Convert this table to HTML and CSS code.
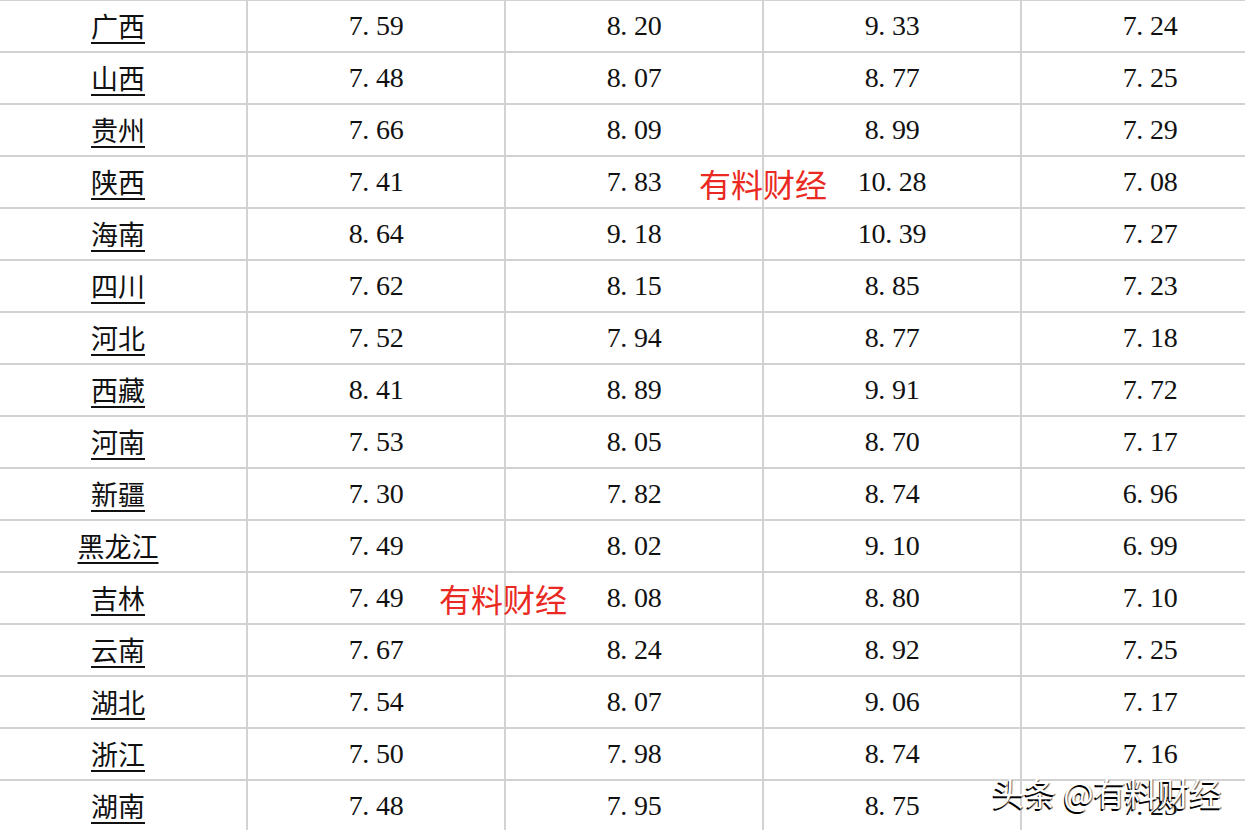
FILE: index.html
```html
<!DOCTYPE html>
<html lang="zh-CN">
<head>
<meta charset="utf-8">
<title>各地数据</title>
<link rel="stylesheet" href="styles.css">
</head>
<body>
<div class="sheet">
<table class="grid">
<tbody>
<tr><td class="name"><u>广西</u></td><td>7<span class="d">.</span>59</td><td>8<span class="d">.</span>20</td><td>9<span class="d">.</span>33</td><td>7<span class="d">.</span>24</td></tr>
<tr><td class="name"><u>山西</u></td><td>7<span class="d">.</span>48</td><td>8<span class="d">.</span>07</td><td>8<span class="d">.</span>77</td><td>7<span class="d">.</span>25</td></tr>
<tr><td class="name"><u>贵州</u></td><td>7<span class="d">.</span>66</td><td>8<span class="d">.</span>09</td><td>8<span class="d">.</span>99</td><td>7<span class="d">.</span>29</td></tr>
<tr><td class="name"><u>陕西</u></td><td>7<span class="d">.</span>41</td><td>7<span class="d">.</span>83</td><td>10<span class="d">.</span>28</td><td>7<span class="d">.</span>08</td></tr>
<tr><td class="name"><u>海南</u></td><td>8<span class="d">.</span>64</td><td>9<span class="d">.</span>18</td><td>10<span class="d">.</span>39</td><td>7<span class="d">.</span>27</td></tr>
<tr><td class="name"><u>四川</u></td><td>7<span class="d">.</span>62</td><td>8<span class="d">.</span>15</td><td>8<span class="d">.</span>85</td><td>7<span class="d">.</span>23</td></tr>
<tr><td class="name"><u>河北</u></td><td>7<span class="d">.</span>52</td><td>7<span class="d">.</span>94</td><td>8<span class="d">.</span>77</td><td>7<span class="d">.</span>18</td></tr>
<tr><td class="name"><u>西藏</u></td><td>8<span class="d">.</span>41</td><td>8<span class="d">.</span>89</td><td>9<span class="d">.</span>91</td><td>7<span class="d">.</span>72</td></tr>
<tr><td class="name"><u>河南</u></td><td>7<span class="d">.</span>53</td><td>8<span class="d">.</span>05</td><td>8<span class="d">.</span>70</td><td>7<span class="d">.</span>17</td></tr>
<tr><td class="name"><u>新疆</u></td><td>7<span class="d">.</span>30</td><td>7<span class="d">.</span>82</td><td>8<span class="d">.</span>74</td><td>6<span class="d">.</span>96</td></tr>
<tr><td class="name"><u>黑龙江</u></td><td>7<span class="d">.</span>49</td><td>8<span class="d">.</span>02</td><td>9<span class="d">.</span>10</td><td>6<span class="d">.</span>99</td></tr>
<tr><td class="name"><u>吉林</u></td><td>7<span class="d">.</span>49</td><td>8<span class="d">.</span>08</td><td>8<span class="d">.</span>80</td><td>7<span class="d">.</span>10</td></tr>
<tr><td class="name"><u>云南</u></td><td>7<span class="d">.</span>67</td><td>8<span class="d">.</span>24</td><td>8<span class="d">.</span>92</td><td>7<span class="d">.</span>25</td></tr>
<tr><td class="name"><u>湖北</u></td><td>7<span class="d">.</span>54</td><td>8<span class="d">.</span>07</td><td>9<span class="d">.</span>06</td><td>7<span class="d">.</span>17</td></tr>
<tr><td class="name"><u>浙江</u></td><td>7<span class="d">.</span>50</td><td>7<span class="d">.</span>98</td><td>8<span class="d">.</span>74</td><td>7<span class="d">.</span>16</td></tr>
<tr><td class="name"><u>湖南</u></td><td>7<span class="d">.</span>48</td><td>7<span class="d">.</span>95</td><td>8<span class="d">.</span>75</td><td>7<span class="d">.</span>25</td></tr>
</tbody>
</table>
<div class="mark mark-a">有料财经</div>
<div class="mark mark-b">有料财经</div>
<div class="credit">头条 @有料财经</div>
</div>
</body>
</html>
```

FILE: styles.css
```css
html, body {
  margin: 0;
  padding: 0;
  background: #ffffff;
  overflow: hidden;
  width: 1245px;
  height: 830px;
}

.sheet {
  position: relative;
  width: 1245px;
  height: 830px;
  overflow: hidden;
}

.grid {
  border-collapse: separate;
  border-spacing: 2px;
  background: #d2d2d2;
  margin: -1px 0 0 -12px;
  table-layout: fixed;
  width: 1292px;
  min-width: 1292px;
}

.grid td {
  background: #ffffff;
  width: 256px;
  height: 50px;
  padding: 0;
  text-align: center;
  vertical-align: middle;
  font-family: "Liberation Serif", "DejaVu Serif", serif;
  font-size: 28px;
  letter-spacing: -0.3px;
  color: #111111;
  line-height: 50px;
}

.grid td .d {
  display: inline-block;
  width: 13.6px;
  text-align: left;
}

.grid td.name {
  font-family: "Noto Sans CJK SC", sans-serif;
  font-size: 27px;
  letter-spacing: 0;
  color: #111111;
}

.grid td.name u {
  text-decoration: underline;
  text-decoration-thickness: 2px;
  text-underline-offset: 5px;
}

.mark {
  position: absolute;
  font-family: "Noto Sans CJK SC", sans-serif;
  font-size: 32px;
  line-height: 40px;
  color: #ea2a22;
  white-space: nowrap;
}

.mark-a {
  left: 699px;
  top: 163px;
}

.mark-b {
  left: 439px;
  top: 578px;
}

.credit {
  position: absolute;
  left: 992px;
  top: 771px;
  font-family: "Noto Sans CJK SC", sans-serif;
  font-size: 32px;
  line-height: 42px;
  color: #ffffff;
  white-space: nowrap;
  text-shadow: -1px 2px 0 #000000, 1px 1px 1px rgba(0,0,0,0.6);
}
```
